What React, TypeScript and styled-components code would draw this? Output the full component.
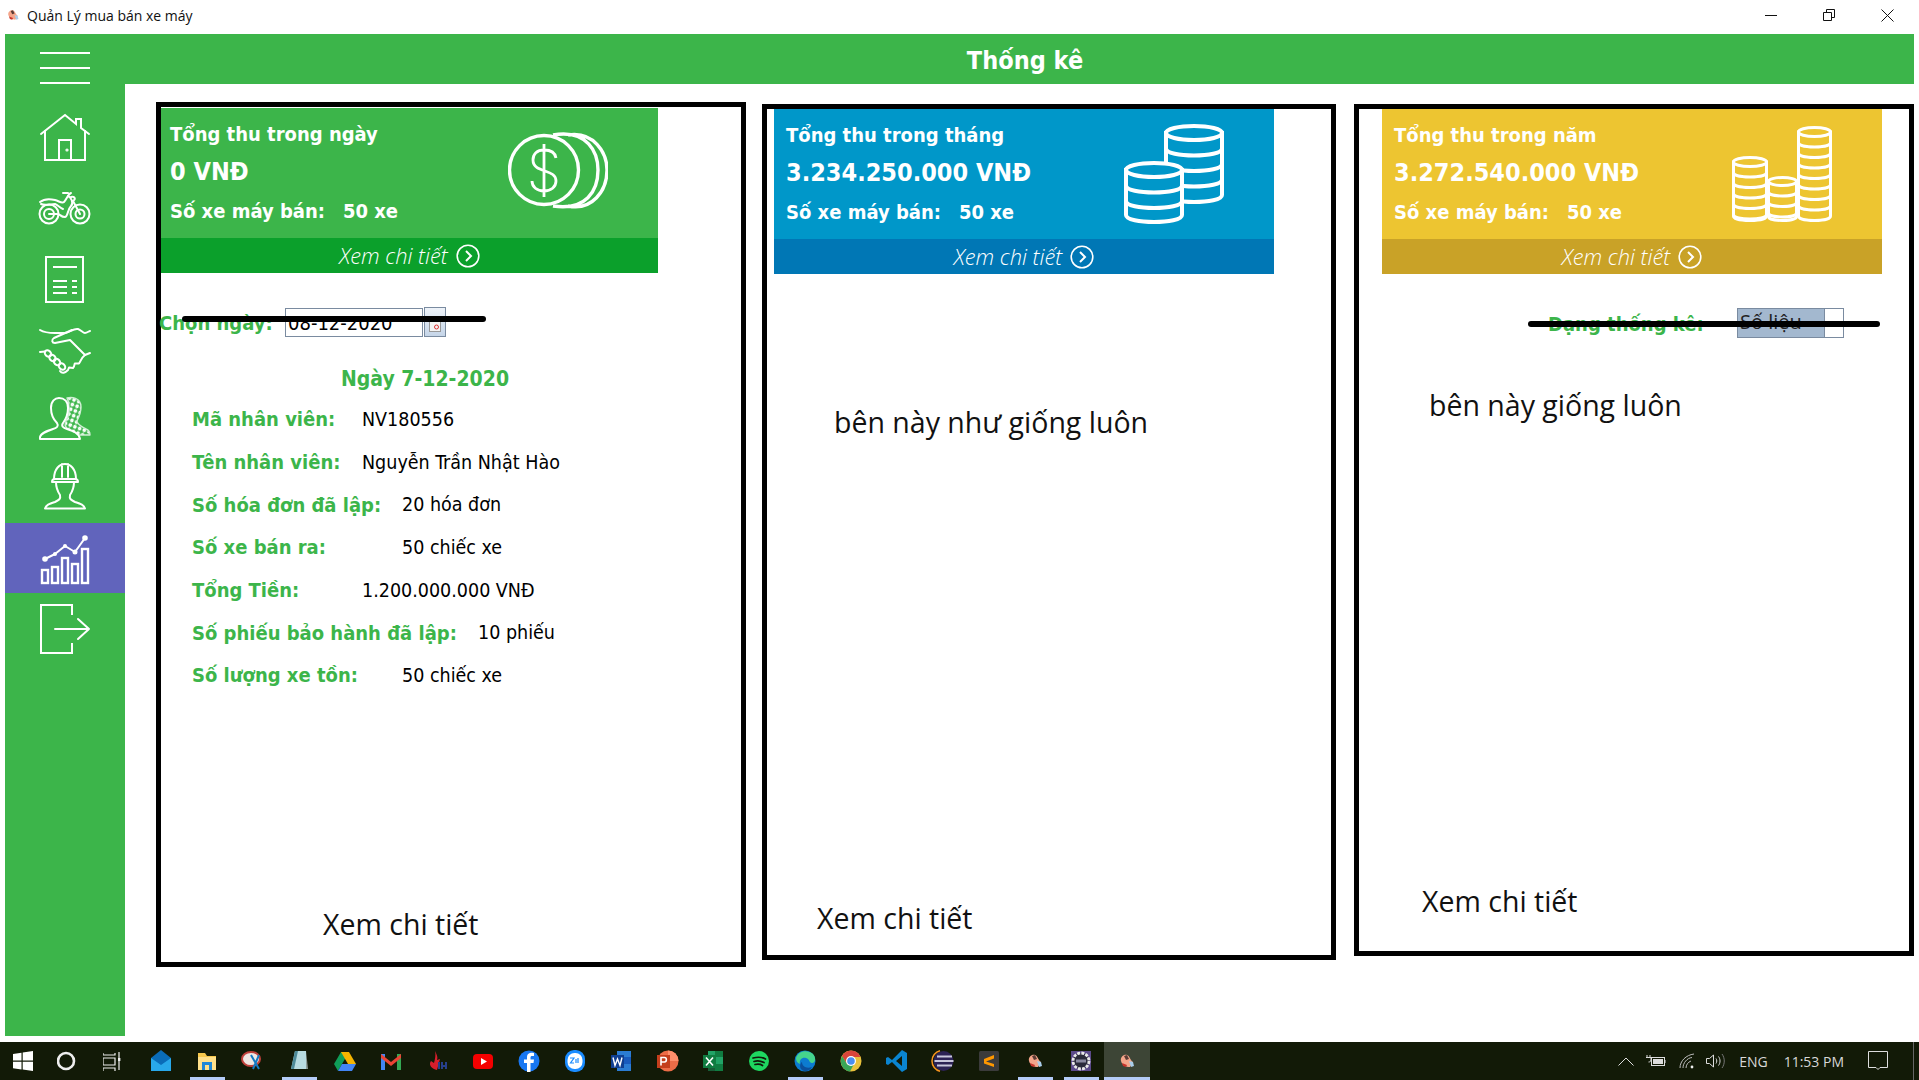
import React from "react";
import styled, { createGlobalStyle } from "styled-components";

const GREEN = "#3cb54a";
const BODY = `"DejaVu Sans", "Noto Sans", sans-serif`;
const UI = `"Open Sans", "Noto Sans", sans-serif`;

const Global = createGlobalStyle`
  html, body { margin: 0; padding: 0; background: #fff; overflow: hidden; }
  * { box-sizing: border-box; }
  #root { width: 1919px; height: 1080px; }
`;

const Screen = styled.div`
  width: 1919px; height: 1080px; display: flex; flex-direction: column; background: #fff; font-family: ${BODY};
`;
const TitleBar = styled.div`
  height: 34px; display: flex; align-items: center; padding: 0 25px 4px 6px; flex: none;
`;
const TitleText = styled.span`
  font: 400 14px ${UI}; color: #111; margin-left: 7px; flex: 1;
`;
const WinControls = styled.div`
  display: flex; gap: 46px; align-items: center;
`;
const Body = styled.div`
  flex: 1; display: flex; padding: 0 5px; min-height: 0; margin-bottom: 6px;
`;
const Sidebar = styled.nav`
  width: 120px; background: ${GREEN}; flex: none; display: flex; flex-direction: column;
`;
const MenuButton = styled.div`
  height: 69px; padding-top: 18px; display: flex; flex-direction: column; align-items: center; gap: 13px;
`;
const MenuLine = styled.span`
  width: 50px; height: 2px; background: #fff;
`;
const NavItem = styled.div<{ $active?: boolean }>`
  height: 70px; display: flex; align-items: center; justify-content: center;
  background: ${(p) => (p.$active ? "#6164bc" : "transparent")};
`;
const Main = styled.main`
  flex: 1; display: flex; flex-direction: column; min-width: 0;
`;
const Header = styled.header`
  height: 50px; background: ${GREEN}; color: #fff; font-weight: 700; font-size: 25px; font-stretch: condensed;
  display: flex; align-items: center; justify-content: center; padding: 2px 0 0 11px; flex: none;
`;
const Content = styled.div`
  flex: 1; display: flex; align-items: flex-start; padding-left: 31px;
`;
const Panel = styled.section<{ $w: number; $h: number; $top: number; $gap: number }>`
  position: relative; width: ${(p) => p.$w}px; height: ${(p) => p.$h}px; margin-top: ${(p) => p.$top}px;
  margin-right: ${(p) => p.$gap}px; border: 5px solid #000; display: flex; flex-direction: column; flex: none;
`;
const Card = styled.div<{ $w: number; $left: number; $top: number; $bg: string }>`
  width: ${(p) => p.$w}px; margin-left: ${(p) => p.$left}px; margin-top: ${(p) => p.$top}px; height: 165px;
  background: ${(p) => p.$bg}; color: #fff; display: flex; flex-direction: column; flex: none;
`;
const CardBody = styled.div<{ $pad: number }>`
  height: 130px; display: flex; align-items: center; justify-content: space-between; padding: 0 50px 0 ${(p) => p.$pad}px;
`;
const CardText = styled.div`
  display: flex; flex-direction: column; font-weight: 700; font-stretch: condensed;
`;
const CardTitle = styled.div`
  font-size: 20px; line-height: 26px; margin-top: -2px;
`;
const CardValue = styled.div`
  font-size: 25px; line-height: 36px; margin-top: 7px;
`;
const CardSub = styled.div`
  font-size: 20px; line-height: 26px; margin-top: 8px; display: flex; gap: 18px;
`;
const CardFooter = styled.div<{ $bg: string }>`
  height: 35px; background: ${(p) => p.$bg}; display: flex; align-items: center; justify-content: center; gap: 8px;
  font: italic 300 21.8px ${UI};
`;
const FilterRow = styled.div<{ $left: number }>`
  margin-top: 34px; height: 30px; margin-left: ${(p) => p.$left}px; display: flex; align-items: center; flex: none;
`;
const FilterLabel = styled.span<{ $w: number }>`
  width: ${(p) => p.$w}px; color: ${GREEN}; font-weight: 700; font-size: 20px; font-stretch: condensed; white-space: nowrap; flex: none; padding-top: 2px;
`;
const DateInput = styled.div`
  width: 138px; height: 29px; border: 1px solid #7a8ba0; font-size: 20px; font-stretch: condensed; line-height: 29px; padding-left: 2px; color: #000;
  margin-right: 1px;
`;
const CalendarButton = styled.div`
  width: 22px; height: 30px; border: 1px solid #7a8ba0; background: linear-gradient(#eef3f9, #c5d5e8); display: flex; align-items: flex-end; justify-content: center; padding-bottom: 4px;
`;
const SelectValue = styled.div`
  width: 88px; height: 30px; background: #a3b8cf; border: 1px solid #7a8ba0; font: 400 20px ${UI}; line-height: 26px; padding-left: 2px; color: #222;
`;
const SelectArrow = styled.div`
  width: 19px; height: 30px; border: 1px solid #7a8ba0; border-left: 0;
`;
const Strike = styled.div<{ $left: number; $top: number; $w: number }>`
  position: absolute; left: ${(p) => p.$left}px; top: ${(p) => p.$top}px; width: ${(p) => p.$w}px; height: 6px; background: #000; border-radius: 3px;
`;
const DayHeading = styled.div`
  margin: 27px 0 4px 180px; color: ${GREEN}; font-weight: 700; font-size: 21px; font-stretch: condensed; line-height: 30px; flex: none;
`;
const Rows = styled.div`
  display: flex; flex-direction: column; padding-left: 31px; flex: none;
`;
const Row = styled.div`
  height: 42.7px; display: flex; align-items: center; font-size: 19.5px; font-stretch: condensed; color: #000;
`;
const RowLabel = styled.span<{ $w: number }>`
  width: ${(p) => p.$w}px; flex: none; color: ${GREEN}; font-size: 20px; font-weight: 700; white-space: nowrap;
`;
const Note = styled.div<{ $left: number; $top: number }>`
  margin: ${(p) => p.$top}px 0 0 ${(p) => p.$left}px; font: 400 28.5px/40px ${UI}; color: #111; flex: none;
`;
const BottomNote = styled.div<{ $left: number; $bottom: number }>`
  margin: auto 0 ${(p) => p.$bottom}px ${(p) => p.$left}px; font: 400 28.5px/40px ${UI}; color: #111; flex: none;
`;
const Taskbar = styled.footer`
  height: 38px; flex: none; background: #121a07; display: flex; align-items: stretch; color: #ddd;
`;
const TaskItem = styled.div<{ $state?: "run" | "active" }>`
  width: 46px; flex: none; position: relative; display: flex; align-items: center; justify-content: center;
  background: ${(p) => (p.$state === "active" ? "#3d4536" : "transparent")};
  &::after {
    content: ""; display: ${(p) => (p.$state ? "block" : "none")}; position: absolute; bottom: 0; height: 3px;
    left: ${(p) => (p.$state === "active" ? 0 : 6)}px; right: ${(p) => (p.$state === "active" ? 0 : 5)}px; background: #b4ccf8;
  }
`;
const Tray = styled.div`
  margin-left: auto; display: flex; align-items: center; padding-right: 5px; font: 400 14px ${UI}; color: #d8d8d8;
`;
const TrayText = styled.span<{ $ml: number }>`
  margin-left: ${(p) => p.$ml}px;
`;
const TrayIcon = styled.span<{ $ml: number }>`
  margin-left: ${(p) => p.$ml}px; display: flex;
`;
const TrayEdge = styled.span`
  width: 1px; height: 38px; background: #666; margin-left: 25px;
`;

const Stroke: React.FC<{ w?: number; children: React.ReactNode }> = ({ w = 2, children }) => (
  <svg width="60" height="70" viewBox="0 0 60 70" fill="none" stroke="#fff" strokeWidth={w} strokeLinejoin="round" strokeLinecap="round">
    {children}
  </svg>
);

const HomeIcon = () => (
  <Stroke>
    <path d="M6 31 30 12 41 21V16H46V25L54 31" strokeLinejoin="miter" />
    <path d="M10 28V57H50V28M24 57V37H36V57" strokeLinejoin="miter" />
    <circle cx="32" cy="47" r="0.6" />
  </Stroke>
);
const MotoIcon = () => (
  <Stroke>
    <circle cx="14" cy="41" r="9.5" />
    <circle cx="14" cy="41" r="5" />
    <circle cx="45" cy="41" r="9.5" />
    <circle cx="45" cy="41" r="4.5" />
    <path d="M14 41H22C26 41 25 44 30 44C33 44 32 37 36 33C39 30 36 24 33 23" />
    <path d="M5 29C10 25 16 26 20 27C24 28 27 31 29 29C32 26 33 21 36 20M33 20H28M36 24C40 23 41 26 38 28M38 28L45 41" />
    <path d="M6 31C10 33 16 31 20 31C23 32 25 35 28 36" />
  </Stroke>
);
const InvoiceIcon = () => (
  <Stroke>
    <rect x="11" y="14" width="37" height="45" strokeLinejoin="miter" />
    <path d="M18 24H42M18 38H32M37 38H42M18 44H32M37 44H42M18 50H32M37 50H42" strokeLinecap="butt" />
  </Stroke>
);
const ShakeIcon = () => (
  <Stroke>
    <path d="M5 17C10 20 16 20 20 20H30C35 19 39 15 43 16C46 17 48 20 50 20C52 20 54 18 55 18" />
    <path d="M37 17 19 25C16 27 17 30 20 30L35 27 50 42 55 40" />
    <ellipse cx="13" cy="40.500" rx="3.600" ry="2.800" transform="rotate(45 13 40.500)" />
    <ellipse cx="17.500" cy="45" rx="3.600" ry="2.800" transform="rotate(45 17.500 45)" />
    <ellipse cx="22" cy="49" rx="3.600" ry="2.800" transform="rotate(45 22 49)" />
    <ellipse cx="27" cy="53.500" rx="3.600" ry="2.800" transform="rotate(45 27 53.500)" />
    <path d="M5 39 10 38.500M25 58C27 61 30 60 33 57L34 54.500 38 55C40 53 39 51 40 50.500L44 50.500C46 48 46 45 50 42" />
  </Stroke>
);
const UsersIcon = () => (
  <Stroke w={1.4}>
    <defs>
      <pattern id="dots" width="5" height="5" patternUnits="userSpaceOnUse" patternTransform="rotate(20)">
        <circle cx="2.500" cy="2.500" r="1.200" fill="#e8f6ea" />
      </pattern>
    </defs>
    <path fill="url(#dots)" stroke="#cfeed3" d="M32 15C36 14 46 14 46 24C46 30 44 34 42 38C42 42 48 44 51 46C54 47 55 50 55 52H44C41 50 36 48 33 46C30 44 29 42 31 38C33 34 35 30 34 24C34 20 33 17 32 15Z" />
    <path fill={GREEN} strokeWidth="2" d="M5 56V54C6 50 12 48 18 46C22 45 24 43 22 40C18 36 16 31 16 25C16 18 20 15 24 15C29 15 33 18 33 25C33 31 31 36 28 40C26 43 28 45 32 46C38 48 44 50 45 56Z" />
  </Stroke>
);
const WorkerIcon = () => (
  <Stroke>
    <path d="M19 26C19 6 41 6 41 26M27 11V24M33 11V24" />
    <path d="M17 29C17 27 18 26 20 26H40C42 26 43 27 43 29Z" />
    <path d="M21 29C21 36 23 39 25 42C26 46 24 47 20 49C14 51 11 52 10 55.500H50C49 52 46 51 40 49C36 47 34 46 35 42C37 39 39 36 39 29" />
  </Stroke>
);
const ChartIcon = () => (
  <Stroke>
    <path d="M10 36 20 31 30 23 40 29 50 15" />
    <circle cx="10" cy="36" r="1.8" fill="#fff" />
    <circle cx="20" cy="31" r="1" fill="#fff" />
    <circle cx="30" cy="23" r="1" fill="#fff" />
    <circle cx="40" cy="29" r="1.5" fill="#fff" />
    <circle cx="50" cy="15" r="1.8" fill="#fff" />
    <g strokeLinejoin="miter" strokeWidth="2.4">
      <rect x="7" y="47" width="6" height="13" />
      <rect x="17" y="44" width="6" height="16" />
      <rect x="27" y="35" width="6" height="25" />
      <rect x="37" y="41" width="6" height="19" />
      <rect x="47" y="26" width="6" height="34" />
    </g>
  </Stroke>
);
const LogoutIcon = () => (
  <Stroke>
    <path d="M37 22V12H6V60H37V50" strokeLinecap="butt" strokeLinejoin="miter" />
    <path d="M20 36H54M43 26 54 36 43 46" />
  </Stroke>
);

const Arrow = () => (
  <svg width="24" height="24" viewBox="0 0 24 24" fill="none" stroke="#fff" strokeWidth="1.6">
    <circle cx="12" cy="12" r="10.8" />
    <path d="M10 7 15 12 10 17" strokeWidth="2" />
  </svg>
);

const CoinsIcon = () => (
  <svg width="100" height="100" viewBox="0 0 100 100" fill="none" stroke="#fff" strokeWidth="3.4">
    <path d="M45 12C80 6 90 30 90 47C90 68 78 88 45 83M60 12C86 8 99 30 99 47C99 68 84 88 60 83" />
    <circle cx="36" cy="47" r="34.5" fill={GREEN} />
    <path d="M48 35C47 29 42 27 36 27C29 27 25 31 25 37C25 44 31 46 37 48C43 50 48 52 48 58C48 64 43 68 36 68C29 68 24 64 24 58M36 21V74" strokeWidth="2.8" />
  </svg>
);

const Stack: React.FC<{ x: number; w: number; top: number; bottom: number; band: number; ry: number; bg: string; sw: number }> = ({ x, w, top, bottom, band, ry, bg, sw }) => {
  const rx = w / 2 - sw / 2;
  const cx = x + w / 2;
  const l = cx - rx;
  const r = cx + rx;
  const topC = top + ry + sw / 2;
  const botC = bottom - ry - sw / 2;
  const bands: string[] = [];
  for (let y = topC + band; y < botC - 0.5; y += band) {
    bands.push(`M${l} ${y}C${l} ${y + ry * 1.33} ${r} ${y + ry * 1.33} ${r} ${y}`);
  }
  return (
    <g stroke="#fff" strokeWidth={sw} fill={bg}>
      <path d={`M${l} ${topC}V${botC}C${l} ${botC + ry * 1.33} ${r} ${botC + ry * 1.33} ${r} ${botC}V${topC}Z`} />
      <ellipse cx={cx} cy={topC} rx={rx} ry={ry} />
      <path d={bands.join("")} fill="none" />
    </g>
  );
};

const MonthIcon = () => (
  <svg width="100" height="100" viewBox="0 0 100 100">
    <Stack x={40} w={60} top={0} bottom={80} band={15.5} ry={7} bg="#0097c9" sw={4} />
    <Stack x={0} w={60} top={37} bottom={100} band={15.5} ry={7} bg="#0097c9" sw={4} />
  </svg>
);
const YearIcon = () => (
  <svg width="100" height="100" viewBox="0 0 100 100">
    <Stack x={65} w={35} top={2} bottom={98} band={10.5} ry={4.5} bg="#edc531" sw={3} />
    <Stack x={0} w={36} top={32} bottom={98} band={10.5} ry={4.5} bg="#edc531" sw={3} />
    <Stack x={35} w={31} top={52} bottom={98} band={10.5} ry={4} bg="#edc531" sw={3} />
  </svg>
);

const AppGlyph: React.FC<{ size?: number }> = ({ size = 18 }) => (
  <svg width={size} height={size} viewBox="0 0 18 18">
    <path d="M3 9C2 5 6 2 9 3C12 4 12 8 15 10L12 15C8 15 4 13 3 9Z" fill="#f4a58a" />
    <path d="M6 4 9 3 11 7 8 8Z" fill="#5a3a34" />
    <path d="M4 11 9 13 8 15 5 14Z" fill="#c8322a" />
    <path d="M11 9 15 10 16 14 13 15Z" fill="#a9cdea" />
  </svg>
);

const I: React.FC<{ children: React.ReactNode; s?: number }> = ({ children, s = 24 }) => (
  <svg width={s} height={s} viewBox="0 0 24 24">{children}</svg>
);

const taskIcons: { key: string; state?: "run" | "active"; icon: React.ReactNode }[] = [
  { key: "win", icon: <I><path d="M2 5 10.5 3.800V11.500H2ZM11.700 3.600 22 2V11.500H11.700ZM2 12.700H10.500V20.400L2 19.200ZM11.700 12.700H22V22L11.700 20.500Z" fill="#fff" /></I> },
  { key: "cortana", icon: <I><circle cx="9" cy="12" r="8" fill="none" stroke="#eee" strokeWidth="2.600" /></I> },
  { key: "view", icon: <I><path d="M0 4V6H12V4M0 9H12V16H0ZM0 22V19H12V22M16 3V21" fill="none" stroke="#eee" strokeWidth="1.200" /><rect x="15" y="9" width="2.400" height="3" fill="#eee" /></I> },
  { key: "mail", icon: <I><path d="M2 9 12 1 22 9V22H2Z" fill="#0a6cb8" /><path d="M2 9 12 16 22 9V22H2Z" fill="#28a8ea" /></I> },
  { key: "files", state: "run", icon: <I><path d="M3 4H10L12 7H21V21H3Z" fill="#f6c84c" /><path d="M3 8H21V21H3Z" fill="#ffe08a" /><path d="M7 13H17V21H14V16H10V21H7Z" fill="#1f87d6" /></I> },
  { key: "snip", icon: <I><ellipse cx="10" cy="10" rx="9" ry="7" fill="#efe7e3" stroke="#c0413b" strokeWidth="2" /><path d="M10 6 18 20M18 6 12 20" stroke="#1479c4" strokeWidth="2" /></I> },
  { key: "note", state: "run", icon: <I><path d="M8 2H19L19 20H4Z" fill="#b7dbe0" /><path d="M8 2H11L7 20H4Z" fill="#4d8a98" /><path d="M19 20 19 2 21 20Z" fill="#8c9a96" /></I> },
  { key: "drive", icon: <I><path d="M8 3H16L9 15 5 22 1 15Z" fill="#0f9d58" /><path d="M8 3H16L23 15H15Z" fill="#f4b400" /><path d="M9 15H23L19 22H5Z" fill="#4285f4" /></I> },
  { key: "gmail", icon: <I><path d="M2 5H6V21H2Z" fill="#4285f4" /><path d="M18 5H22V21H18Z" fill="#34a853" /><path d="M2 5 12 13 22 5V9L12 17 2 9Z" fill="#ea4335" /></I> },
  { key: "ih", icon: <I><path d="M10 2C12 6 13 8 12 11L15 10 12 21C7 20 3 16 6 12L9 14C10 10 11 6 10 2Z" fill="#d81e2c" /><path d="M13 13H15V20H13ZM16 13H18V16H20V13H22V20H20V18H18V20H16Z" fill="#27408b" /></I> },
  { key: "yt", icon: <I><rect x="2" y="5" width="20" height="15" rx="4" fill="#f40000" /><path d="M10 9 16 12.500 10 16Z" fill="#fff" /></I> },
  { key: "fb", icon: <I><circle cx="12" cy="12" r="10.500" fill="#1877f2" /><path d="M13.500 23V14H16.500L17 10.500H13.500V8.500C13.500 7.500 14 7 15 7H17V4C15 3.600 10 3 10 8.500V10.500H7V14H10V23Z" fill="#fff" /></I> },
  { key: "zalo", icon: <I><rect x="2" y="1" width="20" height="22" rx="9" fill="#1a8cff" /><rect x="4.500" y="4" width="15" height="16" rx="7" fill="#fff" /><path d="M7 9H11L7.500 14H11M13 10V14M15 9V14" stroke="#1a8cff" fill="none" strokeWidth="1.200" /></I> },
  { key: "word", icon: <I><path d="M8 2H22V22H8Z" fill="#2b7cd3" /><path d="M8 8H22V15H8Z" fill="#185abd" /><rect x="2" y="6" width="13" height="13" fill="#103f91" /><path d="M4 8.500 6 16.500 8.500 10 11 16.500 13 8.500" fill="none" stroke="#fff" strokeWidth="1.400" /></I> },
  { key: "ppt", icon: <I><circle cx="13" cy="12" r="10.500" fill="#ed6c47" /><path d="M13 1.500A10.500 10.500 0 0 1 23.500 12H13Z" fill="#ff8f6b" /><rect x="2" y="6" width="13" height="13" fill="#c43e1c" /><path d="M6 16.500V8.500H9.500C12 8.500 12 13 9.500 13H6" fill="none" stroke="#fff" strokeWidth="1.600" /></I> },
  { key: "xls", icon: <I><path d="M7 2H22V22H7Z" fill="#21a366" /><path d="M14 2H22V8H14ZM14 15H22V22H14Z" fill="#107c41" /><path d="M7 15H14V22H7Z" fill="#185c37" /><rect x="2" y="6" width="13" height="13" fill="#107c41" /><path d="M5 8.500 12 16.500M12 8.500 5 16.500" stroke="#fff" strokeWidth="1.600" /></I> },
  { key: "spotify", icon: <I><circle cx="12" cy="12" r="10" fill="#1ed760" /><path d="M6 9C10 8 15 8 18.500 10M7 12.500C10 11.500 14 12 17 13.500M8 15.500C10.500 15 13.500 15 15.500 16.500" fill="none" stroke="#12180a" strokeWidth="1.700" strokeLinecap="round" /></I> },
  { key: "edge", state: "run", icon: <I><circle cx="12" cy="12" r="10.500" fill="#0c7bd0" /><path d="M3 9C5 2 14 0 20 5C23 8 23 14 19 14C16 14 17 10 13 9C9 8 6 11 7 15C4 14 3 12 3 9Z" fill="#45d48c" /><path d="M9 13C9 17 13 20 19 18C17 22 12 23 9 21C6 19 7 14 9 13Z" fill="#0a4f9c" /></I> },
  { key: "chrome", icon: <I><circle cx="12" cy="12" r="10.500" fill="#e9c13b" /><path d="M12 1.500A10.500 10.500 0 0 0 3 7L8 15 12 8H21.500A10.500 10.500 0 0 0 12 1.500Z" fill="#d9453a" /><path d="M3 7A10.500 10.500 0 0 0 11 22.500L15 15H8Z" fill="#3aa757" /><circle cx="12" cy="12" r="5" fill="#fff" /><circle cx="12" cy="12" r="3.800" fill="#4a8ef0" /></I> },
  { key: "code", icon: <I><path d="M17 1 22 4V20L17 23 7 13 3 16 1 15V9L3 8 7 11ZM17 7 11 12 17 17Z" fill="#0a85d1" /></I> },
  { key: "eclipse", icon: <I><circle cx="12.500" cy="12" r="10" fill="#2c2255" /><path d="M6 7.500H21M3.500 12H22.500M6 16.500H21" stroke="#c8c6dc" strokeWidth="2" /><path d="M9 1.800A10.500 10.500 0 0 0 9 22.200" fill="none" stroke="#f7941e" strokeWidth="1.500" /></I> },
  { key: "sublime", icon: <I><rect x="2" y="2" width="20" height="20" rx="1.500" fill="#3b3b3b" /><path d="M7 10 17 6V9.500L9 12.500 17 15V18L7 14.500Z" fill="#ff9800" /></I> },
  { key: "app1", state: "run", icon: <AppGlyph /> },
  { key: "gear", state: "run", icon: <I><rect x="2" y="2" width="20" height="20" fill="#5b4a8a" /><circle cx="12" cy="12" r="8" fill="#2a2a3a" stroke="#e8e8e8" strokeWidth="2.800" strokeDasharray="3 1.200" /><path d="M7 12H17" stroke="#8a8aa0" strokeWidth="3" /></I> },
  { key: "app2", state: "active", icon: <AppGlyph /> },
];

const Row1 = [
  { l: "Mã nhân viên:", w: 170, v: "NV180556" },
  { l: "Tên nhân viên:", w: 170, v: "Nguyễn Trần Nhật Hào" },
  { l: "Số hóa đơn đã lập:", w: 210, v: "20 hóa đơn" },
  { l: "Số xe bán ra:", w: 210, v: "50 chiếc xe" },
  { l: "Tổng Tiền:", w: 170, v: "1.200.000.000 VNĐ" },
  { l: "Số phiếu bảo hành đã lập:", w: 286, v: "10 phiếu" },
  { l: "Số lượng xe tồn:", w: 210, v: "50 chiếc xe" },
];

const Summary: React.FC<{ title: string; value: string; bg: string; dark: string; w: number; left: number; top: number; pad: number; icon: React.ReactNode }> = ({ title, value, bg, dark, w, left, top, pad, icon }) => (
  <Card $w={w} $left={left} $top={top} $bg={bg}>
    <CardBody $pad={pad}>
      <CardText>
        <CardTitle>{title}</CardTitle>
        <CardValue>{value}</CardValue>
        <CardSub><span>Số xe máy bán:</span><span>50 xe</span></CardSub>
      </CardText>
      {icon}
    </CardBody>
    <CardFooter $bg={dark}>
      <span>Xem chi tiết</span>
      <Arrow />
    </CardFooter>
  </Card>
);

export default function App() {
  return (
    <Screen>
      <Global />
      <TitleBar>
        <AppGlyph size={14} />
        <TitleText>Quản Lý mua bán xe máy</TitleText>
        <WinControls>
          <svg width="12" height="12" viewBox="0 0 12 12" stroke="#111" fill="none"><path d="M0 6.500H12" /></svg>
          <svg width="12" height="12" viewBox="0 0 12 12" stroke="#111" fill="none"><path d="M.5 3.500H8.500V11.500H.5ZM3.500 3.500V.5H11.500V8.500H8.500" /></svg>
          <svg width="13" height="13" viewBox="0 0 13 13" stroke="#111" fill="none"><path d="M.5 .5 12.500 12.500M12.500 .5 .5 12.500" /></svg>
        </WinControls>
      </TitleBar>
      <Body>
        <Sidebar>
          <MenuButton><MenuLine /><MenuLine /><MenuLine /></MenuButton>
          <NavItem><HomeIcon /></NavItem>
          <NavItem><MotoIcon /></NavItem>
          <NavItem><InvoiceIcon /></NavItem>
          <NavItem><ShakeIcon /></NavItem>
          <NavItem><UsersIcon /></NavItem>
          <NavItem><WorkerIcon /></NavItem>
          <NavItem $active><ChartIcon /></NavItem>
          <NavItem><LogoutIcon /></NavItem>
        </Sidebar>
        <Main>
          <Header>Thống kê</Header>
          <Content>
            <Panel $w={590} $h={865} $top={18} $gap={16}>
              <Summary title="Tổng thu trong ngày" value="0 VNĐ" bg={GREEN} dark="#0ba02b" w={497} left={0} top={1} pad={9} icon={<CoinsIcon />} />
              <FilterRow $left={-2}>
                <FilterLabel $w={126}>Chọn ngày:</FilterLabel>
                <DateInput>08-12-2020</DateInput>
                <CalendarButton>
                  <svg width="12" height="11" viewBox="0 0 12 11"><rect x=".5" y=".5" width="11" height="10" fill="#f4f4f4" stroke="#999" /><circle cx="7.500" cy="6" r="2" fill="none" stroke="#d33" /></svg>
                </CalendarButton>
              </FilterRow>
              <Strike $left={21} $top={209} $w={304} />
              <DayHeading>Ngày 7-12-2020</DayHeading>
              <Rows>
                {Row1.map((r) => (
                  <Row key={r.l}>
                    <RowLabel $w={r.w}>{r.l}</RowLabel>
                    <span>{r.v}</span>
                  </Row>
                ))}
              </Rows>
              <BottomNote $left={162} $bottom={18}>Xem chi tiết</BottomNote>
            </Panel>
            <Panel $w={574} $h={856} $top={20} $gap={18}>
              <Summary title="Tổng thu trong tháng" value="3.234.250.000 VNĐ" bg="#0097c9" dark="#0077b5" w={500} left={7} top={0} pad={12} icon={<MonthIcon />} />
              <Note $left={67} $top={128}>bên này như giống luôn</Note>
              <BottomNote $left={50} $bottom={17}>Xem chi tiết</BottomNote>
            </Panel>
            <Panel $w={560} $h={852} $top={20} $gap={0}>
              <Summary title="Tổng thu trong năm" value="3.272.540.000 VNĐ" bg="#edc531" dark="#c9a227" w={500} left={23} top={0} pad={12} icon={<YearIcon />} />
              <FilterRow $left={189}>
                <FilterLabel $w={189}>Dạng thống kê:</FilterLabel>
                <SelectValue>Số liệu</SelectValue>
                <SelectArrow />
              </FilterRow>
              <Strike $left={169} $top={212} $w={352} />
              <Note $left={70} $top={47}>bên này giống luôn</Note>
              <BottomNote $left={63} $bottom={30}>Xem chi tiết</BottomNote>
            </Panel>
          </Content>
        </Main>
      </Body>
      <Taskbar>
        {taskIcons.map((t) => (
          <TaskItem key={t.key} $state={t.state}>{t.icon}</TaskItem>
        ))}
        <Tray>
          <TrayIcon $ml={0}>
            <svg width="16" height="9" viewBox="0 0 16 9" fill="none" stroke="#ddd"><path d="M.5 8.500 8 1 15.500 8.500" /></svg>
          </TrayIcon>
          <TrayIcon $ml={12}>
            <svg width="20" height="14" viewBox="0 0 20 14" fill="none" stroke="#ddd"><rect x="5.500" y="3.500" width="13" height="8" /><rect x="7" y="5" width="10" height="5" fill="#ddd" stroke="none" /><path d="M19 6V9M1 1V3M4 1V3M0 3.500H5V6C5 8 3 8 2.500 8" /></svg>
          </TrayIcon>
          <TrayIcon $ml={13}>
            <svg width="16" height="16" viewBox="0 0 16 16" fill="none" stroke="#bbb"><path d="M1 15C1 8 7 2 15 1M4 15C4 10 8 5 13 4.500M7 15C7 12 9 9 12 8" /><circle cx="13" cy="14" r="1.400" fill="#eee" stroke="none" /></svg>
          </TrayIcon>
          <TrayIcon $ml={11}>
            <svg width="20" height="16" viewBox="0 0 20 16" fill="none" stroke="#ddd"><path d="M.5 5.500H3.500L7.500 2V14L3.500 10.500H.5ZM10 5.500C11 7 11 9 10 10.500M12.500 3.500C14.500 6 14.500 10 12.500 12.500" /><path d="M16 1C19 5 19 11 16 15" stroke="#777" /></svg>
          </TrayIcon>
          <TrayText $ml={13}>ENG</TrayText>
          <TrayText $ml={16}>11:53 PM</TrayText>
          <TrayIcon $ml={24}>
            <svg width="20" height="20" viewBox="0 0 20 20" fill="none" stroke="#ddd"><path d="M.5 .5H19.500V16.500H12L10 18.500 8 16.500H.5Z" /></svg>
          </TrayIcon>
          <TrayEdge />
        </Tray>
      </Taskbar>
    </Screen>
  );
}
